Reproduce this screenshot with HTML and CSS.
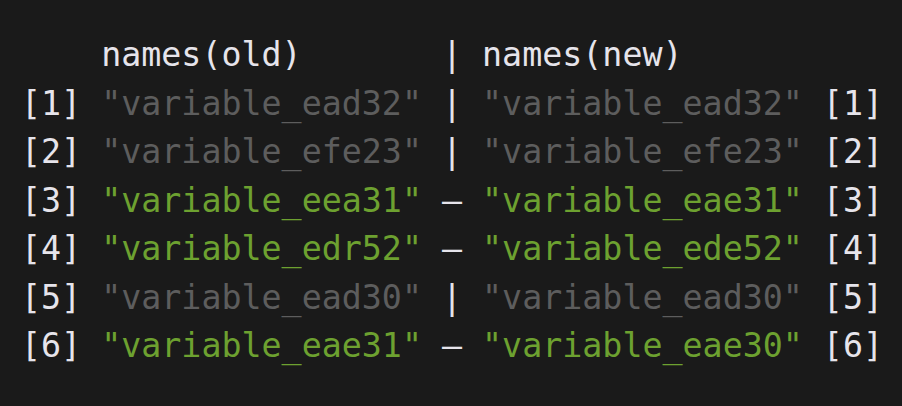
FILE: index.html
```html
<!DOCTYPE html>
<html>
<head>
<meta charset="utf-8">
<link rel="stylesheet" href="styles.css">
</head>
<body>
<div class="term">
<div class="row">    names(old)       | names(new)</div>
<div class="row">[1] <span class="dim">"variable_ead32"</span> | <span class="dim">"variable_ead32"</span> [1]</div>
<div class="row">[2] <span class="dim">"variable_efe23"</span> | <span class="dim">"variable_efe23"</span> [2]</div>
<div class="row">[3] <span class="add">"variable_eea31"</span> – <span class="add">"variable_eae31"</span> [3]</div>
<div class="row">[4] <span class="add">"variable_edr52"</span> – <span class="add">"variable_ede52"</span> [4]</div>
<div class="row">[5] <span class="dim">"variable_ead30"</span> | <span class="dim">"variable_ead30"</span> [5]</div>
<div class="row">[6] <span class="add">"variable_eae31"</span> – <span class="add">"variable_eae30"</span> [6]</div>
</div>
</body>
</html>
```
FILE: styles.css
```css
html, body {
  margin: 0;
  padding: 0;
  background: #1a1a1a;
}
.term {
  padding: 31px 0 0 21px;
  font-family: "DejaVu Sans Mono", "Liberation Mono", monospace;
  font-size: 33.3px;
  line-height: 48.5px;
  color: #e6e4eb;
}
.row {
  white-space: pre;
}
.dim {
  color: #5d5d5d;
}
.add {
  color: #6da130;
}
```
